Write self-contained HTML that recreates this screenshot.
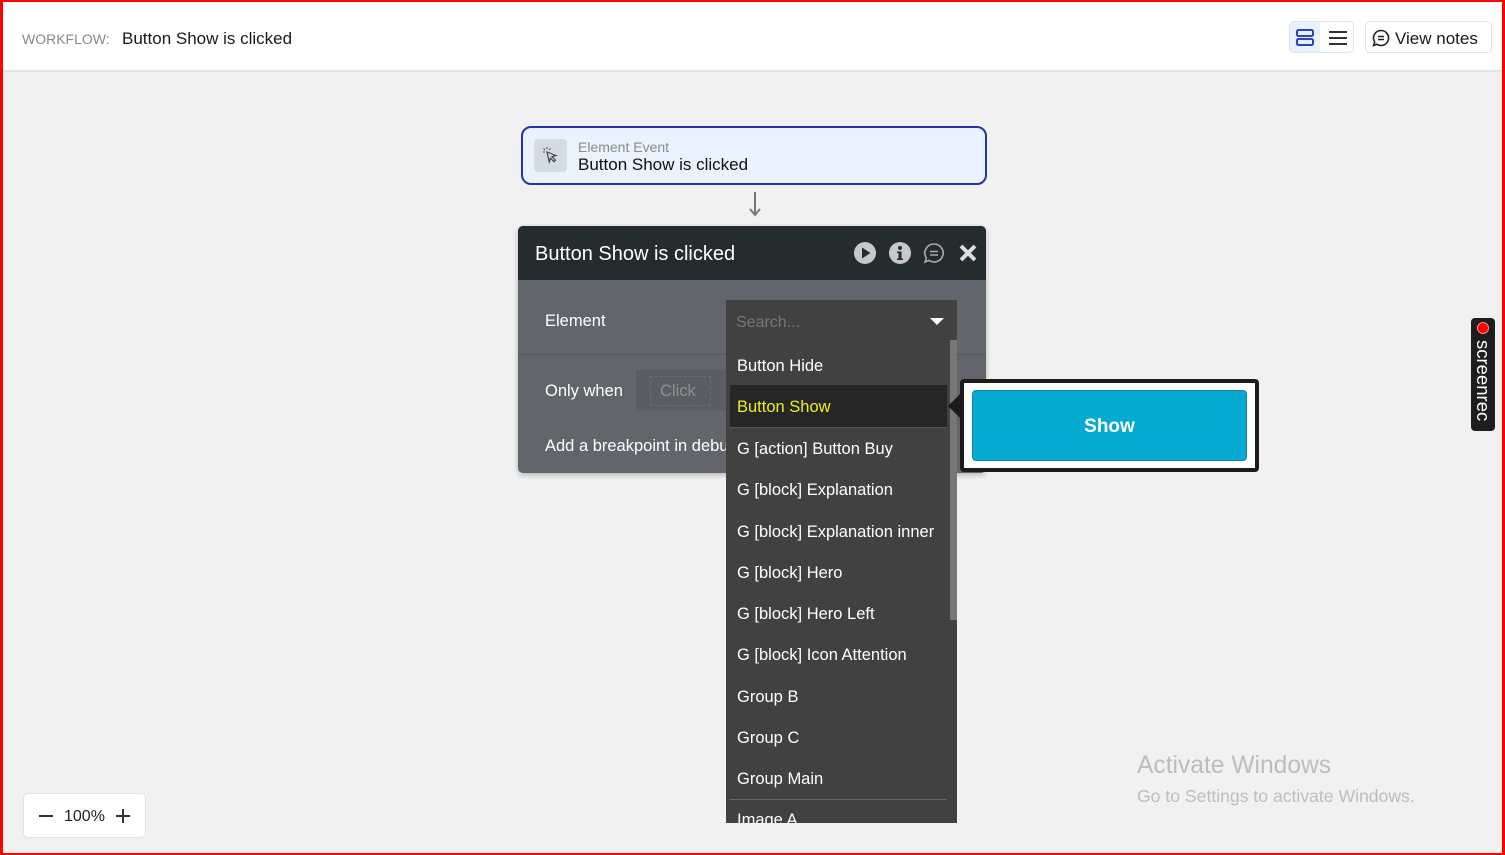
<!DOCTYPE html>
<html><head><meta charset="utf-8"><style>
*{box-sizing:border-box;margin:0;padding:0}
body{width:1505px;height:855px;overflow:hidden;background:#f1f1f1;font-family:"Liberation Sans",sans-serif;position:relative}
.a{position:absolute}
.frame{left:0;top:0;width:1505px;height:855px;border:2px solid #f00;border-left-width:3px;border-right-width:3px;z-index:50;pointer-events:none}
.hdr{left:0;top:0;width:1505px;height:72px;background:#fff;border-bottom:2px solid #e4e4e4}
.item{position:absolute;left:11px;font-size:16.5px;color:#fff;margin-top:2px}
</style></head><body>
<div class="a hdr"></div>
<div class="a" style="left:22px;top:31px;font-size:14px;color:#888">WORKFLOW:</div>
<div class="a" style="left:122px;top:29px;font-size:17px;color:#1a1a1a">Button Show is clicked</div>
<div class="a" style="left:1289px;top:21px;width:65px;height:32px;border:1px solid #e2e2e2;border-radius:5px;background:#fff"></div>
<div class="a" style="left:1290px;top:22px;width:30px;height:30px;background:#e8f0fc;border-radius:4px 0 0 4px"></div>
<svg class="a" style="left:1296px;top:29px" width="18" height="17"><rect x="1" y="1" width="16" height="6" rx="1.5" fill="none" stroke="#2a43b5" stroke-width="2"/><rect x="1" y="10" width="16" height="6" rx="1.5" fill="none" stroke="#2a43b5" stroke-width="2"/></svg>
<svg class="a" style="left:1329px;top:30px" width="18" height="16"><path d="M0 2h18M0 8h18M0 14h18" stroke="#333" stroke-width="2"/></svg>
<div class="a" style="left:1365px;top:21px;width:127px;height:32px;border:1px solid #e2e2e2;border-radius:5px;background:#fff"></div>
<svg class="a" style="left:1372px;top:29px" width="18" height="18"><path d="M9 1.5a7.5 7.5 0 1 1-4 13.8L1.5 16.5 2.7 13A7.5 7.5 0 0 1 9 1.5z" fill="none" stroke="#222" stroke-width="1.6"/><path d="M6 7.5h6M6 10.5h6" stroke="#222" stroke-width="1.5"/></svg>
<div class="a" style="left:1395px;top:29px;font-size:17px;color:#1a1a1a">View notes</div>

<div class="a" style="left:521px;top:126px;width:466px;height:59px;border:2px solid #2335a8;border-radius:10px;background:#eaf2fd"></div>
<div class="a" style="left:534px;top:139px;width:33px;height:33px;background:#d3dbe5;border-radius:4px"></div>
<svg class="a" style="left:541px;top:146px" width="18" height="18"><path d="M6 6l9 3.5-4 1.2 3.5 3.5-1.5 1.5-3.5-3.5L8.3 16z" fill="none" stroke="#444" stroke-width="1.2"/><path d="M2 6h2M6 1v2M2.5 2.5l1.5 1.5M9.5 2.5L8 4" stroke="#444" stroke-width="1"/></svg>
<div class="a" style="left:578px;top:139px;font-size:14px;color:#8b8b8b">Element Event</div>
<div class="a" style="left:578px;top:155px;font-size:17px;color:#111">Button Show is clicked</div>
<svg class="a" style="left:747px;top:192px" width="16" height="26"><path d="M8 0v22M3 17l5 6 5-6" fill="none" stroke="#777" stroke-width="2"/></svg>

<div class="a" style="left:518px;top:226px;width:468px;height:247px;background:#62666a;border-radius:5px;box-shadow:0 2px 6px rgba(0,0,0,.25);overflow:hidden">
  <div class="a" style="left:0;top:0;width:468px;height:54px;background:#262b2e"></div>
  <div class="a" style="left:17px;top:17px;font-size:20px;color:#fff">Button Show is clicked</div>
  <svg class="a" style="left:335px;top:15px" width="24" height="24"><circle cx="12" cy="12" r="11" fill="#c8c8c8"/><path d="M9 6.5v11l8.5-5.5z" fill="#262b2e"/></svg>
  <svg class="a" style="left:370px;top:15px" width="24" height="24"><circle cx="12" cy="12" r="11" fill="#c8c8c8"/><circle cx="12" cy="7" r="2" fill="#262b2e"/><path d="M9 10.5h4.5v7H15v1.5H9v-1.5h1.5v-5.5H9z" fill="#262b2e"/></svg>
  <svg class="a" style="left:405px;top:16px" width="22" height="22"><path d="M11 2a9 9 0 1 1-5 16.4L2 20l1.4-4A9 9 0 0 1 11 2z" fill="none" stroke="#aaa" stroke-width="1.6"/><path d="M7 9.5h8M7 13h8" stroke="#aaa" stroke-width="1.5"/></svg>
  <svg class="a" style="left:441px;top:18px" width="18" height="18"><path d="M2 2l14 14M16 2L2 16" stroke="#ddd" stroke-width="4"/></svg>
  <div class="a" style="left:0;top:128px;width:468px;height:1px;background:#55595d"></div>
  <div class="a" style="left:27px;top:86px;font-size:16.5px;color:#fff">Element</div>
  <div class="a" style="left:27px;top:156px;font-size:16.5px;color:#fff">Only when</div>
  <div class="a" style="left:118px;top:144px;width:90px;height:41px;background:#5a5e62"></div>
  <div class="a" style="left:132px;top:150px;width:61px;height:30px;border:1px dashed #6c7074"></div>
  <div class="a" style="left:142px;top:156px;font-size:16.5px;color:#8d9195">Click</div>
  <div class="a" style="left:27px;top:211px;font-size:16.5px;color:#fff;white-space:nowrap">Add a breakpoint in debug mode</div>
</div>

<div class="a" style="left:726px;top:300px;width:231px;height:523px;background:#414141;overflow:hidden">
  <div class="a" style="left:10px;top:14px;font-size:16px;color:#777">Search...</div>
  <svg class="a" style="left:204px;top:18px" width="14" height="8"><path d="M0 0h14L7 7z" fill="#fff"/></svg>
  <div class="a" style="left:224px;top:40px;width:7px;height:280px;background:#777"></div>
  <div class="a" style="left:4px;top:85px;width:217px;height:42px;background:#262626"></div>
  <div class="item" style="top:55px">Button Hide</div>
  <div class="item" style="top:96px;color:#e9f21b">Button Show</div>
  <div class="a" style="left:4px;top:127px;width:217px;height:1px;background:#555"></div>
  <div class="item" style="top:138px">G [action] Button Buy</div>
  <div class="item" style="top:179px">G [block] Explanation</div>
  <div class="item" style="top:221px">G [block] Explanation inner</div>
  <div class="item" style="top:262px">G [block] Hero</div>
  <div class="item" style="top:303px">G [block] Hero Left</div>
  <div class="item" style="top:344px">G [block] Icon Attention</div>
  <div class="item" style="top:386px">Group B</div>
  <div class="item" style="top:427px">Group C</div>
  <div class="item" style="top:468px">Group Main</div>
  <div class="a" style="left:4px;top:499px;width:217px;height:1px;background:#666"></div>
  <div class="item" style="top:509px">Image A</div>
</div>

<div class="a" style="left:960px;top:379px;width:299px;height:93px;background:#fff;border:4px solid #1c1c1c;border-radius:4px"></div>
<svg class="a" style="left:948px;top:392px" width="14" height="28"><path d="M14 0L0 14l14 14z" fill="#1c1c1c"/></svg>
<div class="a" style="left:972px;top:390px;width:275px;height:71px;background:#06aad0;border:1px solid #1c7fa8;border-radius:4px;color:#fff;font-weight:bold;font-size:19px;text-align:center;line-height:71px">Show</div>

<div class="a" style="left:1471px;top:318px;width:24px;height:113px;background:#1e1e1e;border-radius:4px"></div>
<div class="a" style="left:1477px;top:322px;width:12px;height:12px;border-radius:50%;background:#f00;border:1px solid #f88"></div>
<div class="a" style="left:1470px;top:340px;width:26px;height:90px;writing-mode:vertical-rl;color:#fff;font-size:18.5px;line-height:26px">screenrec</div>

<div class="a" style="left:1137px;top:752px;font-size:24.6px;color:#bdbdbd">Activate Windows</div>
<div class="a" style="left:1137px;top:786px;font-size:17.6px;color:#bdbdbd">Go to Settings to activate Windows.</div>

<div class="a" style="left:23px;top:793px;width:123px;height:45px;background:#fff;border:1px solid #e3e3e3;border-radius:5px"></div>
<div class="a" style="left:39px;top:815px;width:14px;height:2px;background:#333"></div>
<div class="a" style="left:64px;top:808px;font-size:16px;color:#222">100%</div>
<div class="a" style="left:116px;top:815px;width:14px;height:2px;background:#333"></div>
<div class="a" style="left:122px;top:809px;width:2px;height:14px;background:#333"></div>

<div class="a frame"></div>
</body></html>
